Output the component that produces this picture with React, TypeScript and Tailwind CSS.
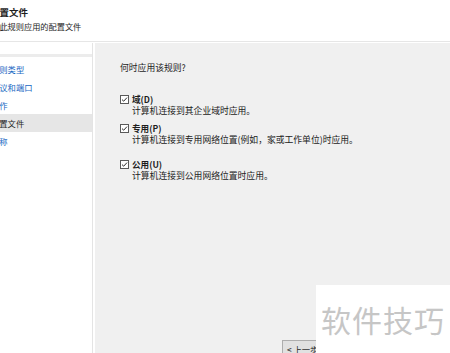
import React from "react";

const steps = [
  { label: "规则类型", active: false },
  { label: "协议和端口", active: false },
  { label: "操作", active: false },
  { label: "配置文件", active: true },
  { label: "名称", active: false },
];

const profiles = [
  { name: "域(D)", desc: "计算机连接到其企业域时应用。", gap: "mt-[21px]" },
  { name: "专用(P)", desc: "计算机连接到专用网络位置(例如，家或工作单位)时应用。", gap: "mt-[7px]" },
  { name: "公用(U)", desc: "计算机连接到公用网络位置时应用。", gap: "mt-[14px]" },
];

function CheckBox() {
  return (
    <svg width="9" height="9" viewBox="0 0 9 9" className="shrink-0">
      <rect x="0.5" y="0.5" width="8" height="8" fill="#ffffff" stroke="#5a5a5a" />
      <path d="M2 4.6 L3.7 6.2 L7 2.6" fill="none" stroke="#2b2b2b" strokeWidth="1" />
    </svg>
  );
}

export default function App() {
  return (
    <div
      className="relative h-[353px] w-[450px] overflow-hidden bg-white text-[#1e1e1e]"
      style={{ fontFamily: '"Noto Sans CJK SC", "Noto Sans", sans-serif' }}
    >
      {/* Header */}
      <div className="h-[42px] border-b border-[#e6e6e6] pt-[6px]">
        <div className="ml-[-10px] text-[9.5px] font-bold leading-[13px]">配置文件</div>
        <div className="ml-[-17px] mt-[2px] text-[8.2px] leading-[11px]">指定此规则应用的配置文件</div>
      </div>

      <div className="flex h-[330px] border-t border-white">
        {/* Steps */}
        <div className="w-[95px] pr-[2px]">
          <div className="h-full border-r border-[#e4e4e4]">
            <div className="h-[14px] border-b-[3px] border-[#ececec]" />
            <div className="pt-[3px]">
              {steps.map((s) => (
                <div
                  key={s.label}
                  className={`flex h-[18px] items-center text-[8.3px] ${
                    s.active ? "bg-[#e6e6e6] text-[#1e1e1e]" : "text-[#1766c2]"
                  }`}
                >
                  <span className="ml-[-9px] whitespace-nowrap">{s.label}</span>
                </div>
              ))}
            </div>
          </div>
        </div>

        {/* Content */}
        <div className="flex flex-1 flex-col bg-[#f0f0f0] pl-[25px] pt-[19px]">
          <div className="text-[8.8px] leading-[11px]">何时应用该规则?</div>
          {profiles.map((p) => (
            <div key={p.name} className={p.gap}>
              <div className="flex h-[11px] items-center gap-[3px]">
                <CheckBox />
                <span className="text-[8.6px] font-bold leading-[11px]">{p.name}</span>
              </div>
              <div className="pl-[12px] text-[8.8px] leading-[11px] text-[#222]">{p.desc}</div>
            </div>
          ))}
          <div className="flex-1" />
          <div className="mb-[14px] flex gap-[6px] pl-[162px]">
            <button className="h-[18px] w-[58px] shrink-0 border border-[#adadad] bg-[#e1e1e1] pl-[4px] text-left text-[8.3px]">
              &lt; 上一步(B)
            </button>
            <button className="h-[18px] w-[58px] shrink-0 border border-[#adadad] bg-[#e1e1e1] text-[8.3px]">
              下一步(N) &gt;
            </button>
          </div>
        </div>
      </div>

      {/* Watermark */}
      <div className="absolute left-[316px] top-[285px] flex h-[68px] w-[134px] items-center bg-white pl-[5px]">
        <span className="text-[30px] leading-none tracking-[1px] text-[#c6c6c6]">软件技巧</span>
      </div>
    </div>
  );
}
